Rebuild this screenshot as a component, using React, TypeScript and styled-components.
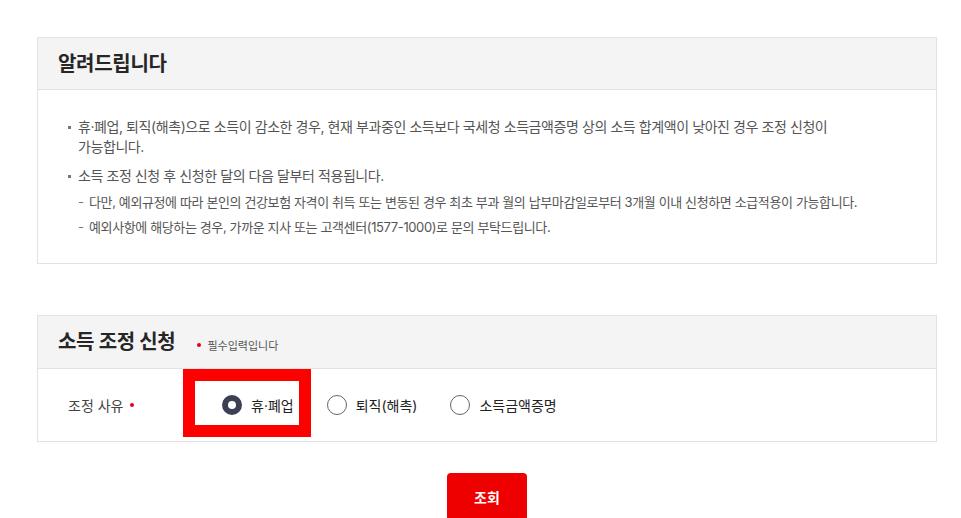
import React from "react";
import styled, { createGlobalStyle } from "styled-components";

const GlobalStyle = createGlobalStyle`
  html, body {
    margin: 0;
    padding: 0;
    background: #ffffff;
  }
  body {
    font-family: "Inter", "Noto Sans CJK KR", sans-serif;
    color: #333;
  }
  * { box-sizing: border-box; }
`;

const Page = styled.div`
  width: 937px;
  padding: 37px 0 0 37px;
`;

const Panel = styled.section<{ $gap?: number }>`
  width: 900px;
  border: 1px solid #e2e2e2;
  margin-top: ${(p) => p.$gap ?? 0}px;
`;

const PanelHeader = styled.div<{ $h: number }>`
  height: ${(p) => p.$h}px;
  background: #f4f4f4;
  border-bottom: 1px solid #e2e2e2;
  display: flex;
  align-items: center;
  padding: 0 20px;
`;

const PanelTitle = styled.h2`
  margin: 0;
  font-size: 20px;
  font-weight: 700;
  letter-spacing: -0.3px;
  color: #262626;
  line-height: 1;
`;

const Required = styled.span`
  display: inline-flex;
  align-items: center;
  margin-left: 22px;
  margin-top: 5px;
  font-size: 11px;
  color: #555;
`;

const RedDot = styled.span<{ $gap?: number }>`
  display: inline-block;
  width: 4px;
  height: 4px;
  border-radius: 50%;
  background: #e60012;
  margin-right: ${(p) => p.$gap ?? 6}px;
`;

const NoticeBody = styled.div`
  padding: 27px 20px 26px 29px;
`;

const BulletList = styled.ul`
  list-style: none;
  margin: 0;
  padding: 0;
  width: 790px;
  word-break: keep-all;
`;

const BulletItem = styled.li`
  position: relative;
  padding-left: 11px;
  font-size: 14px;
  line-height: 20px;
  letter-spacing: -0.42px;
  color: #555;
  & + & {
    margin-top: 9px;
  }
  &::before {
    content: "";
    position: absolute;
    left: 1px;
    top: 9px;
    width: 3px;
    height: 3px;
    background: #777;
  }
`;

const SubList = styled.ul`
  list-style: none;
  margin: 6px 0 0 0;
  padding: 0;
  width: 820px;
  letter-spacing: normal;
`;

const SubItem = styled.li`
  position: relative;
  padding-left: 11px;
  font-size: 13px;
  line-height: 20px;
  letter-spacing: -0.38px;
  color: #555;
  & + & {
    margin-top: 5px;
  }
  &::before {
    content: "-";
    position: absolute;
    left: 0;
    top: 0;
    color: #777;
  }
`;

const FormRow = styled.div`
  position: relative;
  height: 72px;
  display: grid;
  grid-template-columns: 184px 1fr;
  align-items: center;
`;

const RowLabel = styled.div`
  padding-left: 30px;
  font-size: 14px;
  color: #444;
  display: flex;
  align-items: center;
  gap: 7px;
`;

const Options = styled.div`
  display: flex;
  align-items: center;
`;

const Option = styled.label`
  display: inline-flex;
  align-items: center;
  gap: 9px;
  margin-right: 33px;
  font-size: 14px;
  font-weight: 400;
  color: #222;
  cursor: pointer;
`;

const RadioCircle = styled.span<{ $checked?: boolean }>`
  width: 20px;
  height: 20px;
  border-radius: 50%;
  background: #fff;
  border: ${(p) => (p.$checked ? "6px solid #3c4052" : "1px solid #666")};
  flex: none;
`;

const Highlight = styled.div`
  position: absolute;
  left: 145px;
  top: 0;
  width: 128px;
  height: 68px;
  border: 12px solid #ff0000;
  pointer-events: none;
`;

const ButtonBar = styled.div`
  display: flex;
  justify-content: center;
  width: 900px;
  margin-top: 31px;
`;

const SubmitButton = styled.button`
  width: 80px;
  height: 48px;
  border: none;
  border-radius: 4px;
  background: #ee0000;
  color: #fff;
  font-family: "Inter", "Noto Sans CJK KR", sans-serif;
  font-size: 14px;
  font-weight: 700;
  cursor: pointer;
`;

const options = [
  { label: "휴·폐업", checked: true },
  { label: "퇴직(해촉)", checked: false },
  { label: "소득금액증명", checked: false },
];

export default function App() {
  return (
    <>
      <GlobalStyle />
      <Page>
        <Panel>
          <PanelHeader $h={52}>
            <PanelTitle>알려드립니다</PanelTitle>
          </PanelHeader>
          <NoticeBody>
            <BulletList>
              <BulletItem>
                휴·폐업, 퇴직(해촉)으로 소득이 감소한 경우, 현재 부과중인 소득보다 국세청 소득금액증명 상의 소득 합계액이 낮아진 경우 조정 신청이 가능합니다.
              </BulletItem>
              <BulletItem>
                소득 조정 신청 후 신청한 달의 다음 달부터 적용됩니다.
                <SubList>
                  <SubItem>
                    다만, 예외규정에 따라 본인의 건강보험 자격이 취득 또는 변동된 경우 최초 부과 월의 납부마감일로부터 3개월 이내 신청하면 소급적용이 가능합니다.
                  </SubItem>
                  <SubItem>
                    예외사항에 해당하는 경우, 가까운 지사 또는 고객센터(1577-1000)로 문의 부탁드립니다.
                  </SubItem>
                </SubList>
              </BulletItem>
            </BulletList>
          </NoticeBody>
        </Panel>

        <Panel $gap={51}>
          <PanelHeader $h={53}>
            <PanelTitle>소득 조정 신청</PanelTitle>
            <Required>
              <RedDot $gap={6} />
              필수입력입니다
            </Required>
          </PanelHeader>
          <FormRow>
            <RowLabel>
              조정 사유
              <RedDot $gap={0} />
            </RowLabel>
            <Options>
              {options.map((o) => (
                <Option key={o.label}>
                  <RadioCircle $checked={o.checked} />
                  {o.label}
                </Option>
              ))}
            </Options>
            <Highlight />
          </FormRow>
        </Panel>

        <ButtonBar>
          <SubmitButton type="button">조회</SubmitButton>
        </ButtonBar>
      </Page>
    </>
  );
}
